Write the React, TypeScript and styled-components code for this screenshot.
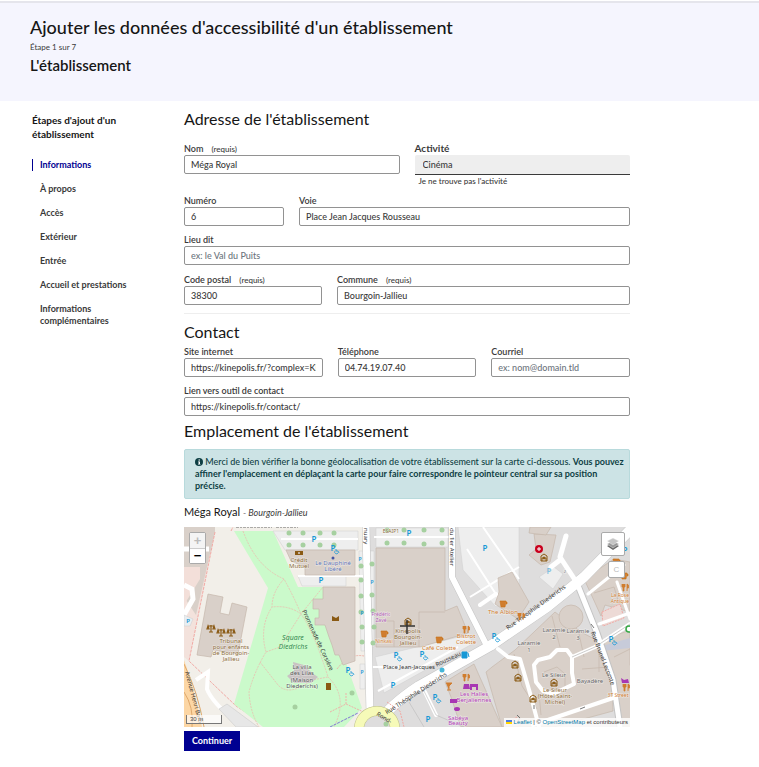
import React from "react";
import styled, { createGlobalStyle } from "styled-components";

const Global = createGlobalStyle`
  *, *::before, *::after { box-sizing: border-box; }
  body { margin: 0; background: #fff; color: #161616; font-family: Lato, "Noto Sans", sans-serif; font-size: 9px; line-height: 12px; }
  h1, h2, h3, p, ol { margin: 0; padding: 0; }
`;

const Banner = styled.header`
  background: #f5f5fe;
  border-top: 2px solid #e5e5ec;
  margin-top: 1px;
  padding: 12px 30px 24px;
`;
const Title = styled.h1`
  font: 500 18px/24px Lato, sans-serif;
`;
const StepCount = styled.p`
  font-size: 8px;
  line-height: 14px;
  margin-top: 1px;
  color: #3a3a3a;
`;
const StepName = styled.h2`
  font: 600 15px/23px Lato, sans-serif;
`;
const Layout = styled.div`
  display: grid;
  grid-template-columns: 112px minmax(0, 1fr);
  column-gap: 40px;
  padding: 6px 129px 16px 32px;
`;
const SideNav = styled.nav`
  padding-top: 6px;
`;
const SideTitle = styled.p`
  font-size: 10px;
  font-weight: 700;
  line-height: 14px;
`;
const StepList = styled.ol`
  list-style: none;
  display: flex;
  flex-direction: column;
  gap: 12px;
  margin-top: 18px;
`;
const StepLink = styled.a<{ $active?: boolean }>`
  display: block;
  padding-left: 7px;
  border-left: 1px solid ${(p) => (p.$active ? "#000091" : "transparent")};
  color: ${(p) => (p.$active ? "#000091" : "#3a3a3a")};
  font-weight: 700;
  line-height: 12px;
  text-decoration: none;
`;
const Heading = styled.h3`
  font: 400 16px/24px Lato, sans-serif;
`;
const Row = styled.div<{ $cols: string; $top: number }>`
  display: grid;
  grid-template-columns: ${(p) => p.$cols};
  column-gap: 15px;
  margin-top: ${(p) => p.$top}px;
`;
const FieldBox = styled.div`
  min-width: 0;
`;
const Label = styled.label<{ $large?: boolean }>`
  display: block;
  font-size: ${(p) => (p.$large ? 10 : 9)}px;
  font-weight: ${(p) => (p.$large ? 700 : 600)};
  line-height: 13px;
  color: #3a3a3a;
`;
const Required = styled.span`
  font-size: 8px;
  font-weight: 500;
  line-height: 8px;
  margin-left: 6px;
`;
const Input = styled.input`
  display: block;
  width: 100%;
  height: 19px;
  padding: 0 6px;
  border: 1px solid #929292;
  border-radius: 2px;
  background: #fff;
  color: #3a3a3a;
  font: inherit;
  font-weight: 500;
  &::placeholder { color: #6c757d; opacity: 1; }
`;
const Select = styled.select`
  display: block;
  appearance: none;
  width: 100%;
  height: 20px;
  padding: 0 8px;
  border: 0;
  border-bottom: 1px solid #3a3a3a;
  border-radius: 2px 2px 0 0;
  background: #eee;
  color: #3a3a3a;
  font: inherit;
  font-weight: 500;
`;
const HelpLink = styled.a`
  display: block;
  margin-left: 4px;
  font-size: 8px;
  font-weight: 500;
  color: #3a3a3a;
  text-decoration: none;
`;
const Divider = styled.hr`
  border: 0;
  border-top: 1px solid #eee;
  margin: 8px 0 6px;
`;
const Alert = styled.p`
  && { margin-top: 6px; }
  padding: 6px 4px 6px 10px;
  border: 1px solid #b8dadc;
  border-radius: 2px;
  background: #cce3e5;
  color: #0e3f44;
  font-weight: 500;
`;
const InfoIcon = styled.svg`
  width: 8px;
  height: 8px;
  vertical-align: -1px;
`;
const Place = styled.p`
  && { margin: 5px 0 7px; }
  font-size: 11px;
  line-height: 16px;
  em { font-size: 9px; line-height: 9px; color: #3a3a3a; }
`;
const MapFrame = styled.div`
  position: relative;
  height: 200px;
  overflow: hidden;
  background: #e0dfdf;
`;
const MapSvg = styled.svg`
  display: block;
  width: 100%;
  height: 100%;
`;
const ZoomGroup = styled.div`
  position: absolute;
  top: 5px;
  left: 5px;
  display: grid;
  border: 1px solid #aaa;
  border-radius: 2px;
`;
const ZoomButton = styled.button`
  width: 15px;
  height: 15px;
  padding: 0;
  border: 0;
  background: #fff;
  font: 700 13px/14px "Liberation Sans", sans-serif;
  color: #000;
  &:disabled { color: #bbb; background: #f4f4f4; }
  & + & { border-top: 1px solid #ccc; }
`;
const MapTools = styled.div`
  position: absolute;
  top: 5px;
  right: 5px;
  display: flex;
  flex-direction: column;
  align-items: flex-end;
  gap: 5px;
`;
const ToolButton = styled.button<{ $size: number }>`
  display: grid;
  place-items: center;
  width: ${(p) => p.$size}px;
  height: ${(p) => p.$size}px;
  padding: 0;
  border: 1px solid #aaa;
  border-radius: 2px;
  background: #fff;
  color: #bbb;
  font-size: 8px;
`;
const Scale = styled.div`
  position: absolute;
  left: 2px;
  bottom: 3px;
  width: 36px;
  height: 9px;
  padding-left: 3px;
  border: 1px solid #777;
  border-top: 0;
  background: #ffffffaa;
  font: 6px/8px "Liberation Sans", sans-serif;
  color: #444;
`;
const Credits = styled.div`
  position: absolute;
  right: 0;
  bottom: 0;
  padding: 0 2px;
  background: #ffffffcc;
  font: 6px/9px "Liberation Sans", sans-serif;
  color: #333;
  white-space: nowrap;
  a { color: #0078a8; text-decoration: none; }
  svg { width: 6px; height: 4px; }
`;
const Submit = styled.button`
  display: block;
  height: 20px;
  margin-top: 4px;
  padding: 0 8px;
  border: 0;
  background: #000091;
  color: #fff;
  font: inherit;
  font-weight: 700;
`;

type FieldProps = { id: string; label: string; value?: string; placeholder?: string; required?: boolean };
function Field({ id, label, value, placeholder, required }: FieldProps) {
  return (
    <FieldBox>
      <Label htmlFor={id}>
        {label}
        {required && <Required> (requis)</Required>}
      </Label>
      <Input id={id} defaultValue={value} placeholder={placeholder} required={required} />
    </FieldBox>
  );
}

const steps = ["Informations", "À propos", "Accès", "Extérieur", "Entrée", "Accueil et prestations", "Informations complémentaires"];

const trees = [
  [105, 6], [119, 6], [136, 6], [150, 6], [105, 18], [119, 18], [136, 18], [150, 18], [203, 16], [220, 16], [240, 17], [258, 16], [203, 3], [220, 3], [240, 3], [258, 3],
  [177, 39], [188, 37], [177, 53], [177, 69], [188, 68], [177, 85], [189, 84], [178, 100], [190, 100], [178, 115], [189, 116], [111, 180], [168, 166], [202, 197],
];
const parkings: [number, number, number][] = [
  [130, 12, 8], [137, 53, 8], [4, 93, 6], [225, 6, 8], [301, 21, 8], [176, 31, 5], [188, 54, 5], [178, 85, 5], [178, 144, 5], [209, 158, 8], [244, 192, 8], [149, 21, 8], [164, 143, 8], [212, 128, 8], [238, 127, 8], [251, 170, 8], [310, 109, 8], [427, 112, 8], [441, 23, 8],
];
const wheelchairs = [[152, 24], [167, 146], [215, 131], [241, 130], [254, 173], [313, 112], [430, 115]];
const labels: [number, number, string, string, number][] = [
  [115, 35, "Crédit", "#8c6c3a", 6], [115, 41, "Mutuel", "#8c6c3a", 6],
  [149, 38, "Le Dauphiné", "#5f74b5", 6], [149, 44, "Libéré", "#5f74b5", 6],
  [47, 116, "Tribunal", "#8c6c3a", 6], [47, 122, "pour enfants", "#8c6c3a", 6], [47, 128, "de Bourgoin-", "#8c6c3a", 6], [47, 134, "Jallieu", "#8c6c3a", 6],
  [118, 142, "La villa", "#555", 6], [118, 148, "des Lilas", "#555", 6], [118, 155, "(Maison", "#555", 6], [118, 161, "Diederichs)", "#555", 6],
  [197, 89, "Frédéric", "#b05ab5", 5], [197, 95, "Zavé", "#b05ab5", 5],
  [200, 116, "Ninkasi", "#d58436", 5], [224, 106, "Kinépolis", "#8c6c3a", 6], [224, 112, "Bourgoin-", "#8c6c3a", 6], [224, 118, "Jallieu", "#8c6c3a", 6],
  [255, 123, "Café Colette", "#d07d2f", 6], [282, 111, "Bistrot", "#d07d2f", 6], [282, 117, "Colette", "#d07d2f", 6],
  [207, 6, "ESAIP1", "#8c6c3a", 5], [290, 169, "Les Halles", "#b040b5", 6], [290, 175, "Berjaliennes", "#b040b5", 6],
  [274, 193, "Sabéya", "#b040b5", 6], [274, 198, "Beauty", "#b040b5", 6],
  [319, 87, "The Albion", "#d07d2f", 6], [370, 105, "Laramie", "#666", 6], [370, 112, "2", "#666", 6], [394, 106, "Laramie", "#666", 6], [394, 113, "3", "#666", 6],
  [345, 118, "Laramie", "#666", 6], [345, 125, "1", "#666", 6], [370, 150, "Le Sileur", "#666", 6], [406, 156, "Bayadère", "#666", 6],
  [371, 165, "Le Sileur", "#8c6c3a", 6], [371, 171, "(Hôtel Saint-", "#8c6c3a", 6], [371, 177, "Michel)", "#8c6c3a", 6],
  [436, 70, "La Rose", "#d07d2f", 5], [436, 76, "Antique", "#d07d2f", 5], [434, 170, "3T Street", "#d07d2f", 5],
  [381, 46, "2", "#777", 4],
];

const Fork = ({ x, y }: { x: number; y: number }) => (
  <path transform={`translate(${x} ${y})`} d="M-3-3v3h1v4h1V0h1v-3M-1-3v3M2 4V-3q2 0 1.500 4h-1" fill="#d07d2f" stroke="#d07d2f" strokeWidth=".8" />
);
const Cup = ({ x, y }: { x: number; y: number }) => (
  <path transform={`translate(${x} ${y})`} d="M-3-3H3L2 3H-2zM3-2h1v2H3" fill="#d07d2f" stroke="#c87112" strokeWidth=".6" />
);
const Badge = ({ x, y }: { x: number; y: number }) => (
  <g transform={`translate(${x} ${y})`} fill="none" stroke="#8a5a14" strokeWidth="1"><path d="M-3-2 0-4 3-2v5H-3zM-2 3V0h4v3" /><circle r="1" fill="#8a5a14" /></g>
);
const Justice = ({ x, y }: { x: number; y: number }) => (
  <path transform={`translate(${x} ${y})`} d="M0-4V3M-3-3H3M-4 0-3-3-2 0zM2 0 3-3 4 0zM-2 3H2" fill="none" stroke="#8a5a14" strokeWidth="1.200" />
);

function CityMap() {
  return (
    <MapSvg viewBox="0 0 446 200" preserveAspectRatio="xMidYMid slice" role="img" aria-label="Carte de l'établissement">
      <rect width="446" height="200" fill="#dedddd" />
      <path d="M0 0H184V200H0z" fill="#f2efe9" />
      <path d="M0 40 31 5 5 134 0 130z" fill="#f3e2dc" />
      <path d="M0 0H31V5L12 88 0 70z" fill="#d9d0c9" />
      <path d="M0 40H16V52L0 78z" fill="#f3dfd9" />
      <path d="M0 22H25M0 58 8 62 9 72 0 88" fill="none" stroke="#fff" strokeWidth="5" />
      <path d="M31 5 5 134 52 179 80 197M47 4 49 0" fill="none" stroke="#f1aaa5" strokeWidth="1" strokeDasharray="3 1" />
      <path d="M0 88 9 92 6 99 0 99z" fill="#e9eef1" stroke="#ccc" strokeWidth=".5" />

      <path d="M50 4H89L114 60H139L162 136 178 181 160 200H79L50 177 84 61z" fill="#cbfacb" />
      <g fill="none" stroke="#e5c9b5" strokeWidth="1" strokeDasharray="2 1">
        <path d="M59 4Q72 40 100 52 110 70 117 87L139 60M117 87Q105 78 88 80 75 100 82 125 70 145 65 165 66 185 75 200M82 125 96 120 117 87Q130 105 144 150L128 153Q105 170 94 158L76 135M100 52Q88 65 88 80M144 150Q165 170 150 200" />
      </g>
      <path d="M153 142Q165 126 180 129M146 185 162 177 186 188M162 177V165" fill="none" stroke="#edb3a8" strokeWidth="1" strokeDasharray="2 1" />

      <path d="M0 133Q10 160 18 200H0z" fill="#fcd6a4" />
      <path d="M0 137Q14 165 20 200M0 165Q10 180 8 200" fill="none" stroke="#dfa86c" strokeWidth="1" />
      <path d="M12 153 24 145 23 162Q28 176 58 200" fill="none" stroke="#fff" strokeWidth="4" />
      <path d="M35 182 43 177 74 200H52z" fill="#e7e7e7" stroke="#c5c5c5" strokeWidth=".5" />

      <g fill="#eee" stroke="#cfcfcf" strokeWidth=".5">
        <path d="M89 4H174V23H101zM114 49H162V59H118zM192 1H264V20H192zM175 24H181V124H177zM186 24H190V120H188zM176 137H181V162H176zM191 130 283 108 290 116 200 166z" />
        <path d="M274 0H335V63L312 80 279 43zM355 50 370 40 379 47 369 62z" />
      </g>
      <path d="M97 12H174M114 49H182M190 10H266M187 140H222M194 164 274 120M283 22 315 72M299 0 335 52M286 70 335 40" fill="none" stroke="#fff" strokeWidth="2" />

      <g fill="#d9d0c9" stroke="#c6b8ac" strokeWidth=".7">
        <path d="M24 67 39 70 36 86 45 88 48 76 63 80 54 127 29 123 27 130 13 128z" />
        <path d="M102 23H171V48H121V40L107 34z" />
        <path d="M139 60H171V134L159 138 155 128H151L148 118 145 110 141 98H131V91H135V82H129V72H139z" />
        <path d="M192 21H261V84L273 79 284 106 236 120H192z" />
        <path d="M235 85V120M192 94H210V120M235 85H261" />
        <path d="M314 51 328 45 345 75 334 92 311 77 315 65z" />
        <path d="M345 28 352 22 350 7 372 8 369 22 366 35 357 38z" />
        <path d="M346 0H367L362 8 345 6z" />
        <path d="M308 140 331 123 371 85 397 105 416 115 428 152 429 184 370 200H318L302 145z" />
        <circle cx="387" cy="90" r="12" />
        <path d="M261 155 290 137 318 200H277L267 170z" />
        <path d="M400 52 430 32 446 35V85L421 78 417 89 407 67z" />
        <path d="M419 113 446 103V200H438L430 151z" />
        <path d="M430 130 446 122M428 170 446 161M410 66 430 60 438 86M330 127 338 159 353 182M368 89 376 120M394 102 400 130M398 142 425 140M357 188 355 166M415 117V145M360 145 373 140 381 147 381 160" fill="none" />
      </g>
      <path d="M418 85 436 77 440 91 419 99z" fill="#eddad6" stroke="#f1aaa5" strokeWidth="1" strokeDasharray="2 1" />
      <path d="M418 119 446 111V121L418 124z" fill="#c7cbd9" />
      <path d="M430 150 446 138V200H438z" fill="#d9d0c9" />

      <g fill="none" strokeLinejoin="round" strokeLinecap="round">
        <g stroke="#c4c4c4">
          <path d="M182 0 184 100 186 188" strokeWidth="8" /><path d="M268 0V50L304 121" strokeWidth="7" />
          <path d="M192 198Q206 178 235 159L306 119 363 80 400 50 446 3" strokeWidth="11" />
          <path d="M393 56 413 106 429 153 436 200" strokeWidth="7" />
        </g>
        <g stroke="#fff">
          <path d="M182 0 184 100 186 188" strokeWidth="7" /><path d="M268 0V50L304 121" strokeWidth="6" />
          <path d="M192 198Q206 178 235 159L306 119 363 80 400 50 446 3" strokeWidth="10" />
          <path d="M393 56 413 106 429 153 436 200M382 9 376 30 393 56M376 33 367 40" strokeWidth="5" />
          <path d="M314 122 324 130 336 132 346 166 355 200M350 138 354 133 366 130 373 123 383 123 388 130 388 146 390 157 369 167 359 164 352 155zM388 130 411 120 446 97M349 198 429 171M241 165 252 188M312 67 296 78" strokeWidth="4" />
          <path d="M404 67 440 38M415 97 446 86M433 55 446 92" strokeWidth="3" />
        </g>
      </g>
      <path d="M388 130 411 120 446 97" stroke="#aaa" strokeWidth=".6" fill="none" />
      <path d="M221 170 240 164 252 188 280 200M225 175 240 200" fill="none" stroke="#bbb" strokeWidth=".6" />

      <circle cx="193" cy="202" r="18" fill="#dedddd" stroke="#bcbf86" strokeWidth="10" />
      <circle cx="193" cy="202" r="18" fill="none" stroke="#f6fab8" strokeWidth="9" />
      <path d="M146 200 174 186" stroke="#8177d4" strokeWidth="1" strokeDasharray="3 1" />
      <path d="M203 175 216 184 220 200M345 193 333 200M333 190 320 198" fill="none" stroke="#f1aaa5" strokeDasharray="2 1" />

      {trees.map(([x, y], i) => <circle key={i} cx={x} cy={y} r="2.500" fill="#a6d0a0" />)}
      <path d="M109 135 120 138 128 146 134 150 127 156H110L103 149 110 144z" fill="#c9c3c3" />

      <g fontFamily="Noto Sans, sans-serif" textAnchor="middle">
        <g fill="#1698d6" fontWeight="600">
          {parkings.map(([x, y, s], i) => <text key={i} x={x} y={y + 3} fontSize={s}>P</text>)}
          <text x="365" y="47" fontSize="8" opacity=".5">P</text>
        </g>
        {wheelchairs.map(([x, y], i) => (
          <path key={i} d={`M${x} ${y - 2}v2h2l1 2M${x - 1} ${y}a1.500 1.500 0 1 0 3 2`} fill="none" stroke="#1698d6" strokeWidth=".8" />
        ))}
        {labels.map(([x, y, t, c, s], i) => (
          <text key={i} x={x} y={y} fill={c} fontSize={s} stroke="#ffffff" strokeOpacity=".5" strokeWidth="1" paintOrder="stroke">{t}</text>
        ))}
        <g fontSize="7" fill="#388a53" fontStyle="italic"><text x="109" y="113">Square</text><text x="109" y="122">Diedrichs</text></g>
        <g fontSize="6" fill="#333">
          <text x="199" y="142" textAnchor="start">Place Jean-Jacques</text>
          <text transform="translate(265 134) rotate(-25)">Rousseau</text>
          <text transform="translate(233 168) rotate(-33)">Rue Théophile Diederichs</text>
          <text transform="translate(353 82) rotate(-36)">Rue Théophile Diederichs</text>
          <text transform="translate(417 132) rotate(69)">Rue Brunel Lecomte</text>
          <text transform="translate(132 114) rotate(65)">Promenade de Corsière</text>
          <text transform="translate(180 1) rotate(90)" textAnchor="start">nuary</text>
          <text transform="translate(266 1) rotate(90)" textAnchor="start">du 1er Atelier</text>
          <text transform="translate(1 145) rotate(75)" textAnchor="start">Avenue Henri Barb</text>
          <text transform="translate(192 188) rotate(32)" textAnchor="start">Rond-</text>
        </g>
      </g>
      <path d="M52 0h36M92 0h22" stroke="#666" strokeWidth="1" strokeDasharray="3 1 2 1" />

      <Justice x={27} y={102} /><Justice x={37} y={106} /><Justice x={47} y={106} />
      <g fill="#8a5a14"><path d="M111 24h8v4h-8zM148 89 152 91 155 89V94H148zM142 156h5v7h-5z" /><circle cx="115" cy="26" r="1" fill="#d9d0c9" /></g>
      <circle cx="149" cy="31" r="1.500" fill="#4256a5" />
      <Badge x={224} y={95} /><Badge x={360} y={31} /><Badge x={331} y={138} /><Badge x={334} y={151} /><Badge x={349} y={172} /><Badge x={370} y={156} />
      <Cup x={200} y={107} /><Cup x={255} y={113} /><Cup x={319} y={77} /><Cup x={432} y={35} /><Cup x={440} y={49} />
      <path d="M262 156h6l-3 3v4m-2 0h4" fill="#d07d2f" stroke="#d07d2f" />
      <Fork x={282} y={102} /><Fork x={337} y={89} /><Fork x={282} y={150} /><Fork x={441} y={60} /><Fork x={442} y={160} />
      <g fill="#a837b3"><path d="M280 157h5l1 5h-7zM286 157h8v6h-2v-3h-4v3h-2zM266 172h7v4h-7zM437 151l3 2 4-1 1 4h-7z" /><ellipse cx="273" cy="182" rx="3" ry="2" /></g>
      <path d="M278 125h5v6h-5zm6 1 1 4" fill="#1698d6" stroke="#1698d6" />
      <circle cx="258" cy="143" r="2.500" fill="#45b6d8" />
      <circle cx="355" cy="22" r="4" fill="#c9001c" /><path d="M353 22h4m-2-2v4" stroke="#fff" />
      <path d="M333 188 336 191 334 194M407 97l3 4M350 178v4M396 182l5-2" fill="none" stroke="#555" strokeWidth=".8" />
      <circle cx="445" cy="102" r="3" fill="#fff" stroke="#36a845" strokeWidth="1.500" />
      <path d="M216 99H231M223 93V107" stroke="#333" strokeWidth="1.500" />
    </MapSvg>
  );
}

export default function App() {
  return (
    <>
      <Global />
      <Banner>
        <Title>Ajouter les données d'accessibilité d'un établissement</Title>
        <StepCount>Étape 1 sur 7</StepCount>
        <StepName>L'établissement</StepName>
      </Banner>
      <Layout>
        <SideNav aria-label="Étapes">
          <SideTitle>Étapes d'ajout d'un établissement</SideTitle>
          <StepList>
            {steps.map((s, i) => (
              <li key={s}>
                <StepLink href="#" $active={i === 0} aria-current={i === 0 ? "step" : undefined}>{s}</StepLink>
              </li>
            ))}
          </StepList>
        </SideNav>
        <main>
          <form onSubmit={(e) => e.preventDefault()}>
            <Heading>Adresse de l'établissement</Heading>
            <Row $cols="minmax(0, 1fr) minmax(0, 1fr)" $top={11}>
              <Field id="nom" label="Nom" value="Méga Royal" required />
              <FieldBox>
                <Label $large htmlFor="activite">Activité</Label>
                <Select id="activite" defaultValue="Cinéma"><option>Cinéma</option></Select>
                <HelpLink href="#">Je ne trouve pas l'activité</HelpLink>
              </FieldBox>
            </Row>
            <Row $cols="minmax(0, 100fr) minmax(0, 331fr)" $top={7}>
              <Field id="numero" label="Numéro" value="6" />
              <Field id="voie" label="Voie" value="Place Jean Jacques Rousseau" />
            </Row>
            <Row $cols="minmax(0, 1fr)" $top={7}>
              <Field id="lieu" label="Lieu dit" placeholder="ex: le Val du Puits" />
            </Row>
            <Row $cols="minmax(0, 138fr) minmax(0, 293fr)" $top={8}>
              <Field id="cp" label="Code postal" value="38300" required />
              <Field id="commune" label="Commune" value="Bourgoin-Jallieu" required />
            </Row>
            <Divider />
            <Heading>Contact</Heading>
            <Row $cols="repeat(3, minmax(0, 1fr))" $top={1}>
              <Field id="site" label="Site internet" value="https://kinepolis.fr/?complex=KBOUR" />
              <Field id="tel" label="Téléphone" value="04.74.19.07.40" />
              <Field id="mail" label="Courriel" placeholder="ex: nom@domain.tld" />
            </Row>
            <Row $cols="minmax(0, 1fr)" $top={7}>
              <Field id="lien" label="Lien vers outil de contact" value="https://kinepolis.fr/contact/" />
            </Row>
            <Row $cols="minmax(0, 1fr)" $top={3}>
              <Heading>Emplacement de l'établissement</Heading>
            </Row>
            <Alert>
              <InfoIcon viewBox="0 0 16 16" aria-hidden="true">
                <circle cx="8" cy="8" r="8" fill="currentColor" />
                <path d="M7 3h3v2H7zM6 7h4v5h1v1H6v-1h1V8H6z" fill="#fff" />
              </InfoIcon>{" "}
              Merci de bien vérifier la bonne géolocalisation de votre établissement sur la carte ci-dessous.{" "}
              <strong>Vous pouvez affiner l'emplacement en déplaçant la carte pour faire correspondre le pointeur central sur sa position précise.</strong>
            </Alert>
            <Place>Méga Royal <em>- Bourgoin-Jallieu</em></Place>
            <MapFrame>
              <CityMap />
              <ZoomGroup>
                <ZoomButton type="button" disabled aria-label="Zoomer">+</ZoomButton>
                <ZoomButton type="button" aria-label="Dézoomer">−</ZoomButton>
              </ZoomGroup>
              <MapTools>
                <ToolButton type="button" $size={24} aria-label="Couches">
                  <svg width="14" height="14" viewBox="0 0 14 14">
                    <path d="M1 9 7 6l6 3-6 4z" fill="#666" /><path d="M1 7 7 4l6 3-6 4z" fill="#999" stroke="#fff" strokeWidth=".4" /><path d="M1 4 7 1l6 3-6 4z" fill="#c5c5c5" stroke="#fff" strokeWidth=".4" />
                  </svg>
                </ToolButton>
                <ToolButton type="button" $size={17}>C</ToolButton>
              </MapTools>
              <Scale>30 m</Scale>
              <Credits>
                <svg viewBox="0 0 6 4" aria-hidden="true"><path d="M0 0h6v2H0z" fill="#4c7be1" /><path d="M0 2h6v2H0z" fill="#ffd500" /></svg>{" "}
                <a href="#">Leaflet</a> | © <a href="#">OpenStreetMap</a> et contributeurs
              </Credits>
            </MapFrame>
            <Submit type="submit">Continuer</Submit>
          </form>
        </main>
      </Layout>
    </>
  );
}
